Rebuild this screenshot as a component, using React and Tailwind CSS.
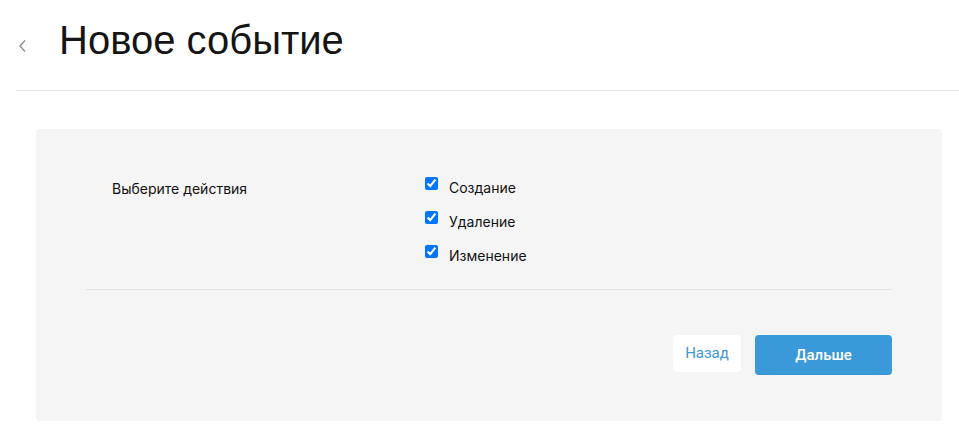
import React, { useState } from "react";

const options = ["Создание", "Удаление", "Изменение"];

const App = () => {
  const [checked, setChecked] = useState({
    Создание: true,
    Удаление: true,
    Изменение: true,
  });

  return (
    <div className="min-h-[440px] bg-white font-['Inter',sans-serif] text-[#111111]">
      <div className="flex items-center h-[91px] ml-[16px] pl-[2px] border-b border-[#e6e6e6]">
        <button className="text-[#8a8a8a] mr-[32px] mt-[2px]">
          <svg width="9" height="14" viewBox="0 0 9 14" fill="none">
            <path d="M7 1.5L2 7l5 5.5" stroke="currentColor" strokeWidth="1.3" />
          </svg>
        </button>
        <h1 className="font-['Liberation_Sans',Arial,sans-serif] text-[40px] leading-none text-[#151515] -mt-[11px]">
          Новое событие
        </h1>
      </div>

      <div className="ml-[36px] mt-[38px] mr-[17px] bg-[#f5f5f5] rounded-[4px] pt-[45px] px-[50px] pb-[46px]">
        <div className="flex">
          <div className="w-[339px] pl-[26px] text-[14px] pt-[4px]">Выберите действия</div>
          <div className="flex flex-col gap-[13px] pt-[2px]">
            {options.map((o) => (
              <label key={o} className="flex items-center gap-[11px] text-[14px] h-[21px]">
                <input
                  type="checkbox"
                  className="w-[13px] h-[13px] m-0 -mt-[6px]"
                  checked={checked[o]}
                  onChange={() => setChecked({ ...checked, [o]: !checked[o] })}
                />
                <span className="pt-[2px]">{o}</span>
              </label>
            ))}
          </div>
        </div>

        <div className="border-t border-[#e3e3e3] mt-[24px] pt-[45px] flex justify-end gap-[14px]">
          <button className="bg-white rounded-[4px] h-[37px] w-[68px] text-[15px] text-[#3a99d8] font-['Roboto',sans-serif]">
            Назад
          </button>
          <button className="bg-[#3a99d8] rounded-[4px] h-[40px] w-[137px] text-[15px] text-white font-medium font-['Roboto',sans-serif]">
            Дальше
          </button>
        </div>
      </div>
    </div>
  );
};

export default App;
